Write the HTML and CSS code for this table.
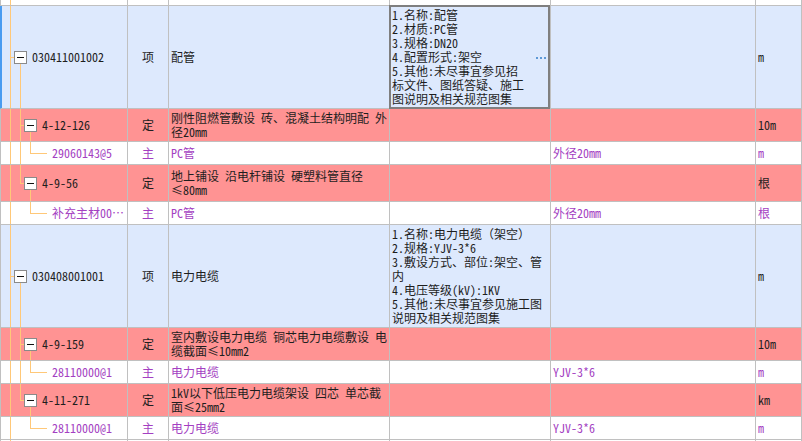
FILE: index.html
```html
<!DOCTYPE html>
<html lang="zh-CN">
<head>
<meta charset="utf-8">
<title>清单</title>
<link rel="stylesheet" href="styles.css">
</head>
<body>
<div class="grid">
  <div class="row h0">
    <div class="cell tree t-root"></div><div class="cell"></div><div class="cell"></div><div class="cell"></div><div class="cell"></div><div class="cell"></div>
  </div>

  <div class="row blue h-big selected">
    <div class="cell tree t-top lv1"><span class="box"></span><span class="code">030411001002</span></div>
    <div class="cell center">项</div>
    <div class="cell">配管</div>
    <div class="cell desc editing"><div class="lines">1.名称:配管<br>2.材质:PC管<br>3.规格:DN20<br>4.配置形式:架空<br>5.其他:未尽事宜参见招<br>标文件、图纸答疑、施工<br>图说明及相关规范图集</div><span class="more"></span></div>
    <div class="cell"></div>
    <div class="cell">m</div>
  </div>

  <div class="row pink h2">
    <div class="cell tree t-mid lv2"><span class="box"></span><span>4-12-126</span></div>
    <div class="cell center">定</div>
    <div class="cell"><div class="lines">刚性阻燃管敷设 砖、混凝土结构明配 外<br>径20mm</div></div>
    <div class="cell"></div>
    <div class="cell"></div>
    <div class="cell">10m</div>
  </div>

  <div class="row h1 purple">
    <div class="cell tree t-leaf lv3">29060143@5</div>
    <div class="cell center">主</div>
    <div class="cell">PC管</div>
    <div class="cell"></div>
    <div class="cell">外径20mm</div>
    <div class="cell">m</div>
  </div>

  <div class="row pink h2b">
    <div class="cell tree t-last lv2"><span class="box"></span><span>4-9-56</span></div>
    <div class="cell center">定</div>
    <div class="cell"><div class="lines">地上铺设 沿电杆铺设 硬塑料管直径<br>≤80mm</div></div>
    <div class="cell"></div>
    <div class="cell"></div>
    <div class="cell">根</div>
  </div>

  <div class="row h1 purple">
    <div class="cell tree t-leaflast lv3">补充主材00…</div>
    <div class="cell center">主</div>
    <div class="cell">PC管</div>
    <div class="cell"></div>
    <div class="cell">外径20mm</div>
    <div class="cell">根</div>
  </div>

  <div class="row blue h-big">
    <div class="cell tree t-top lv1"><span class="box"></span><span class="code">030408001001</span></div>
    <div class="cell center">项</div>
    <div class="cell">电力电缆</div>
    <div class="cell desc"><div class="lines">1.名称:电力电缆（架空）<br>2.规格:YJV-3*6<br>3.敷设方式、部位:架空、管<br>内<br>4.电压等级(kV):1KV<br>5.其他:未尽事宜参见施工图<br>说明及相关规范图集</div></div>
    <div class="cell"></div>
    <div class="cell">m</div>
  </div>

  <div class="row pink h2">
    <div class="cell tree t-mid lv2"><span class="box"></span><span>4-9-159</span></div>
    <div class="cell center">定</div>
    <div class="cell"><div class="lines">室内敷设电力电缆 铜芯电力电缆敷设 电<br>缆截面≤10mm2</div></div>
    <div class="cell"></div>
    <div class="cell"></div>
    <div class="cell">10m</div>
  </div>

  <div class="row h1 purple">
    <div class="cell tree t-leaf lv3">28110000@1</div>
    <div class="cell center">主</div>
    <div class="cell">电力电缆</div>
    <div class="cell"></div>
    <div class="cell">YJV-3*6</div>
    <div class="cell">m</div>
  </div>

  <div class="row pink h2">
    <div class="cell tree t-last lv2"><span class="box"></span><span>4-11-271</span></div>
    <div class="cell center">定</div>
    <div class="cell"><div class="lines">1kV以下低压电力电缆架设 四芯 单芯截<br>面≤25mm2</div></div>
    <div class="cell"></div>
    <div class="cell"></div>
    <div class="cell">km</div>
  </div>

  <div class="row h1 purple">
    <div class="cell tree t-leaflast lv3">28110000@1</div>
    <div class="cell center">主</div>
    <div class="cell">电力电缆</div>
    <div class="cell"></div>
    <div class="cell">YJV-3*6</div>
    <div class="cell">m</div>
  </div>

  <div class="row h-end">
    <div class="cell tree t-root"></div><div class="cell"></div><div class="cell"></div><div class="cell"></div><div class="cell"></div><div class="cell"></div>
  </div>
</div>
</body>
</html>
```

FILE: styles.css
```css
* { box-sizing: border-box; }

html, body {
  margin: 0;
  padding: 0;
  background: #ffffff;
}

body {
  width: 802px;
  height: 441px;
  overflow: hidden;
  font-family: "Noto Sans Mono CJK SC", "Noto Sans CJK SC", "DejaVu Sans", sans-serif;
  font-size: 12px;
  color: #1e1e1e;
}

.grid {
  display: flex;
  flex-direction: column;
}

.row {
  display: grid;
  grid-template-columns: 127px 41px 221px 161px 205px 46px;
  border-left: 1px solid #c0c0c0;
  border-bottom: 1px solid #c0c0c0;
  background: #ffffff;
  flex: none;
}

.h0 { height: 6px; }
.h-big { height: 103px; }
.h2 { height: 33px; }
.h2b { height: 37px; }
.h1 { height: 23px; }
.h-end { height: 12px; border-bottom: none; }

.blue { background: #dde9fd; }
.pink { background: #ff9393; }
.purple { color: #a43fc2; }

.selected { border-left: 1px solid #4a9cf0; }
.selected .tree { box-shadow: inset 1px 0 0 #4a9cf0; }

.cell {
  border-right: 1px solid #c0c0c0;
  display: flex;
  align-items: center;
  padding: 0 2px;
  line-height: 14px;
  white-space: nowrap;
  overflow: hidden;
  min-width: 0;
}

.lines {
  line-height: 14px;
}

.center { justify-content: center; padding: 0; }

.desc {
  overflow: visible;
}

.editing {
  position: relative;
}
.editing::after {
  content: "";
  position: absolute;
  top: -1px;
  left: -1px;
  right: 0;
  bottom: -1px;
  border: 2px solid #7f7f7f;
  pointer-events: none;
}

.more {
  position: absolute;
  right: 4px;
  top: 50%;
  width: 10px;
  height: 2px;
  background: linear-gradient(90deg, #5d99d6 0 2px, transparent 2px 4px) 0 0 / 4px 2px repeat-x;
}

/* tree column */
.tree { padding: 0; }
.lv1 { padding-left: 13px; }
.lv2 { padding-left: 23px; }
.lv3 { padding-left: 51px; }

.box {
  flex: none;
  width: 13px;
  height: 13px;
  margin-right: 5px;
  border: 1px solid #8a8a8a;
  background: linear-gradient(#111, #111) center / 7px 1px no-repeat, #ffffff;
}

.t-root {
  background: linear-gradient(#ffc878, #ffc878) 9px 0 / 1px 100% no-repeat;
}
.t-top {
  background:
    linear-gradient(#ffc878, #ffc878) 9px 0 / 1px 100% no-repeat,
    linear-gradient(#ffc878, #ffc878) 9px 50% / 5px 1px no-repeat,
    linear-gradient(#ffc878, #ffc878) 19px 100% / 1px 50% no-repeat;
}
.t-mid {
  background:
    linear-gradient(#ffc878, #ffc878) 9px 0 / 1px 100% no-repeat,
    linear-gradient(#ffc878, #ffc878) 19px 0 / 1px 100% no-repeat,
    linear-gradient(#ffc878, #ffc878) 19px 50% / 5px 1px no-repeat,
    linear-gradient(#ffc878, #ffc878) 29px 100% / 1px 50% no-repeat;
}
.t-leaf {
  background:
    linear-gradient(#ffc878, #ffc878) 9px 0 / 1px 100% no-repeat,
    linear-gradient(#ffc878, #ffc878) 19px 0 / 1px 100% no-repeat,
    linear-gradient(#ffc878, #ffc878) 29px 0 / 1px 50% no-repeat,
    linear-gradient(#ffc878, #ffc878) 29px 50% / 17px 1px no-repeat;
}
.t-last {
  background:
    linear-gradient(#ffc878, #ffc878) 9px 0 / 1px 100% no-repeat,
    linear-gradient(#ffc878, #ffc878) 19px 0 / 1px 50% no-repeat,
    linear-gradient(#ffc878, #ffc878) 19px 50% / 5px 1px no-repeat,
    linear-gradient(#ffc878, #ffc878) 29px 100% / 1px 50% no-repeat;
}
.t-leaflast {
  background:
    linear-gradient(#ffc878, #ffc878) 9px 0 / 1px 100% no-repeat,
    linear-gradient(#ffc878, #ffc878) 29px 0 / 1px 50% no-repeat,
    linear-gradient(#ffc878, #ffc878) 29px 50% / 17px 1px no-repeat;
}
```
